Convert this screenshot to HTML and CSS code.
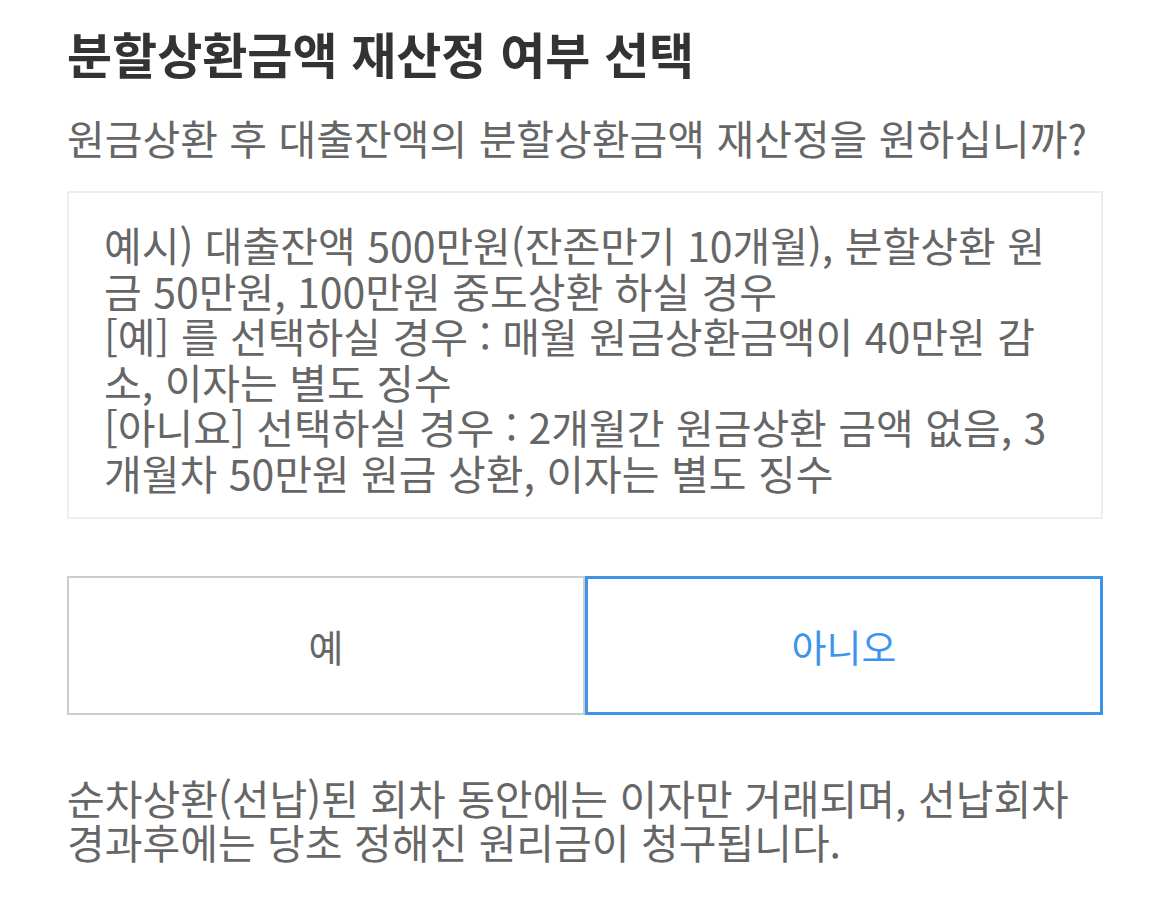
FILE: index.html
```html
<!DOCTYPE html>
<html lang="ko">
<head>
	<meta charset="utf-8">
	<title>분할상환금액 재산정</title>
	<meta name="viewport" content="width=device-width, initial-scale=1">
	<link rel="stylesheet" href="styles.css">
</head>
<body>
	<div class="sheet">
		<h1 class="title">분할상환금액 재산정 여부 선택</h1>
		<p class="question">원금상환 후 대출잔액의 분할상환금액 재산정을 원하십니까?</p>

		<div class="example">
			예시) 대출잔액 500만원(잔존만기 10개월), 분할상환 원금 50만원, 100만원 중도상환 하실 경우<br>
			[예] 를 선택하실 경우 : 매월 원금상환금액이 40만원 감소, 이자는 별도 징수<br>
			[아니요] 선택하실 경우 : 2개월간 원금상환 금액 없음, 3개월차 50만원 원금 상환, 이자는 별도 징수
		</div>

		<div class="choices">
			<button class="choice" type="button">예</button>
			<button class="choice on" type="button">아니오</button>
		</div>

		<p class="note">순차상환(선납)된 회차 동안에는 이자만 거래되며, 선납회차 경과후에는 당초 정해진 원리금이 청구됩니다.</p>
	</div>
</body>
</html>
```

FILE: styles.css
```css
html,
body {
	margin: 0;
	padding: 0;
	background: #fff;
}

:root {
	--font: "Noto Sans CJK KR", "Noto Sans", sans-serif;
	--text: #666;
	--blue: #3d94ea;
}

body {
	font-family: var(--font);
	color: var(--text);
}

.sheet {
	padding: 24px 67px 0;
}

.title {
	margin: 0;
	font-size: 49px;
	line-height: 57px;
	font-weight: 700;
	color: #333;
}

.question {
	margin: 32px 0 0;
	font-size: 41px;
	line-height: 48px;
}

.example {
	margin-top: 30px;
	border: 2px solid #eee;
	padding: 29px 35px 22px;
	font-size: 41px;
	line-height: 45.5px;
}

.choices {
	display: grid;
	grid-template-columns: 1fr 1fr;
	margin-top: 57px;
}

.choice {
	height: 139px;
	background: #fff;
	border: 2px solid #ccc;
	font: 38px var(--font);
	color: var(--text);
	padding: 0;
}

.choice.on {
	border: 3px solid var(--blue);
	color: var(--blue);
}

.note {
	margin: 60px 0 0;
	font-size: 41px;
	line-height: 44px;
}
```
